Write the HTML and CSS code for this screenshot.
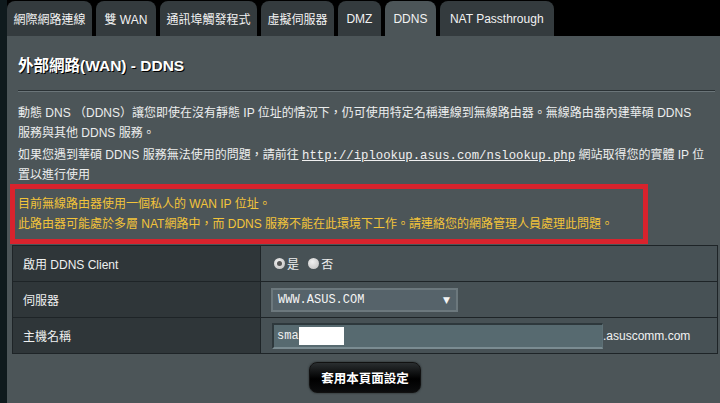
FILE: index.html
```html
<!DOCTYPE html>
<html lang="zh-Hant">
<head>
<meta charset="utf-8">
<title>外部網路(WAN) - DDNS</title>
<link rel="stylesheet" href="styles.css">
</head>
<body>
<div class="page">
  <nav class="tabs">
    <div class="tab">網際網路連線</div>
    <div class="tab latin">雙 WAN</div>
    <div class="tab">通訊埠觸發程式</div>
    <div class="tab">虛擬伺服器</div>
    <div class="tab latin">DMZ</div>
    <div class="tab latin active">DDNS</div>
    <div class="tab wide">NAT Passthrough</div>
  </nav>
  <main class="panel">
    <h2 class="title">外部網路(WAN) - DDNS</h2>
    <div class="rule"></div>
    <div class="desc">
      <p>動態 DNS （DDNS）讓您即使在沒有靜態 IP 位址的情況下，仍可使用特定名稱連線到無線路由器。無線路由器內建華碩 DDNS<br>服務與其他 DDNS 服務。</p>
      <p>如果您遇到華碩 DDNS 服務無法使用的問題，請前往 <a class="link" href="#">http://iplookup.asus.com/nslookup.php</a> 網站取得您的實體 IP 位置以進行使用</p>
    </div>
    <div class="warn">
      <p>目前無線路由器使用一個私人的 WAN IP 位址。</p>
      <p>此路由器可能處於多層 NAT網路中，而 DDNS 服務不能在此環境下工作。請連絡您的網路管理人員處理此問題。</p>
    </div>
    <table class="form">
      <tr>
        <th>啟用 DDNS Client</th>
        <td>
          <label class="radio"><span class="dot checked"></span>是</label>
          <label class="radio"><span class="dot"></span>否</label>
        </td>
      </tr>
      <tr>
        <th>伺服器</th>
        <td><div class="select"><span>WWW.ASUS.COM</span><span class="arrow">▼</span></div></td>
      </tr>
      <tr>
        <th>主機名稱</th>
        <td><div class="host"><div class="input"><span>sma</span><span class="mask"></span></div><span class="suffix">.asuscomm.com</span></div></td>
      </tr>
    </table>
    <div class="actions"><button class="apply">套用本頁面設定</button></div>
  </main>
</div>
</body>
</html>
```

FILE: styles.css
```css
* { box-sizing: border-box; }
html, body { margin: 0; padding: 0; }
body {
  background: #000;
  font-family: "Liberation Sans", "Noto Sans CJK TC", sans-serif;
  font-size: 12px;
  color: #eceeee;
  width: 720px;
  height: 403px;
  overflow: hidden;
}
.page {
  padding-left: 7px;
  height: 403px;
  display: flex;
  flex-direction: column;
  background: linear-gradient(90deg, #0f1a1d 0, #0f1a1d 7px, #000 7px);
}
.tabs {
  display: flex;
  gap: 4px;
  height: 36px;
  padding-top: 1px;
  background: #000;
}
.tab {
  background: #343b3e;
  color: #f2f2f2;
  border-radius: 8px 8px 0 0;
  padding: 0 6.5px;
  display: flex;
  align-items: center;
  font-size: 12px;
  white-space: nowrap;
}
.tab.latin { padding: 0 8.5px; }
.tab.wide { padding: 0 10px; }
.tab.active { background: #4c5558; }
.panel {
  flex: 1;
  background: #4c5558;
  padding: 20px 0 0 11px;
}
.title {
  margin: 0;
  font-size: 15.5px;
  font-weight: bold;
  color: #fff;
  text-shadow: 1px 1px 0 #000;
  line-height: 20px;
  height: 26px;
}
.rule {
  margin: 8px 5px 0 0;
  border-top: 1px solid #2b3235;
  border-bottom: 1px solid #6b7579;
}
.desc {
  width: 692px;
  margin-top: 11px;
}
.desc p, .warn p { margin: 0; line-height: 20px; }
.desc p + p { margin-top: 2px; }
.link {
  color: #f0f0f0;
  font-family: "Liberation Mono", monospace;
  font-size: 12.3px;
  line-height: 14px;
}
.warn {
  margin: -1px 0 0 -8px;
  width: 638px;
  border: 5px solid #d9232d;
  padding: 5px 0 5px 3px;
  color: #f3c43a;
}
.form {
  margin: 1px 0 0 -6px;
  width: 706px;
  border-collapse: collapse;
  border: 1px solid #1e2427;
}
.form th, .form td {
  border: 1px solid #1e2427;
  height: 36px;
  padding: 0;
  font-weight: normal;
  text-align: left;
}
.form th {
  width: 248px;
  background: #2f3639;
  padding-left: 10px;
  color: #eef0f0;
}
.form td {
  background: #475155;
  padding-left: 10px;
}
.radio {
  display: inline-flex;
  align-items: center;
  gap: 2px;
  margin-right: 6px;
  margin-left: 3px;
  color: #eee;
}
.radio + .radio { margin-left: 0; }
.dot {
  width: 11px;
  height: 11px;
  border-radius: 50%;
  background: radial-gradient(circle at 40% 35%, #f0f0f0, #bdbdbd);
  display: inline-block;
  position: relative;
}
.dot.checked::after {
  content: "";
  position: absolute;
  left: 3px;
  top: 3px;
  width: 5px;
  height: 5px;
  border-radius: 50%;
  background: #555;
}
.select {
  width: 187px;
  height: 24px;
  background: #56636a;
  border: 2px solid #6c787d;
  display: flex;
  align-items: center;
  justify-content: space-between;
  padding: 0 6px 0 5px;
  font-family: "Liberation Mono", monospace;
  font-size: 12px;
  color: #f4f4f4;
}
.arrow { font-size: 9px; font-family: "DejaVu Sans", sans-serif; }
.host { display: flex; align-items: center; }
.input {
  width: 331px;
  height: 26px;
  margin-left: 1px;
  background: #576a70;
  border-top: 2px solid #2e383c;
  border-left: 2px solid #2e383c;
  border-bottom: 2px solid #7b8c92;
  border-right: 1px solid #5e7076;
  display: flex;
  align-items: center;
  padding-left: 3px;
  font-family: "Liberation Mono", monospace;
  font-size: 12px;
  color: #f0f0f0;
}
.mask {
  width: 45px;
  height: 18px;
  background: #fff;
}
.suffix { color: #f2f2f2; }
.actions {
  width: 706px;
  margin-left: -6px;
  display: flex;
  justify-content: center;
  padding-top: 8px;
}
.apply {
  width: 112px;
  height: 31px;
  border: 1px solid #111;
  border-radius: 8px;
  background: linear-gradient(#2a2e30, #000 55%, #0b0c0d);
  box-shadow: 0 0 2px #1a1f21;
  color: #fff;
  font-family: "Liberation Sans", "Noto Sans CJK TC", sans-serif;
  font-size: 12.5px;
  font-weight: bold;
}
```
